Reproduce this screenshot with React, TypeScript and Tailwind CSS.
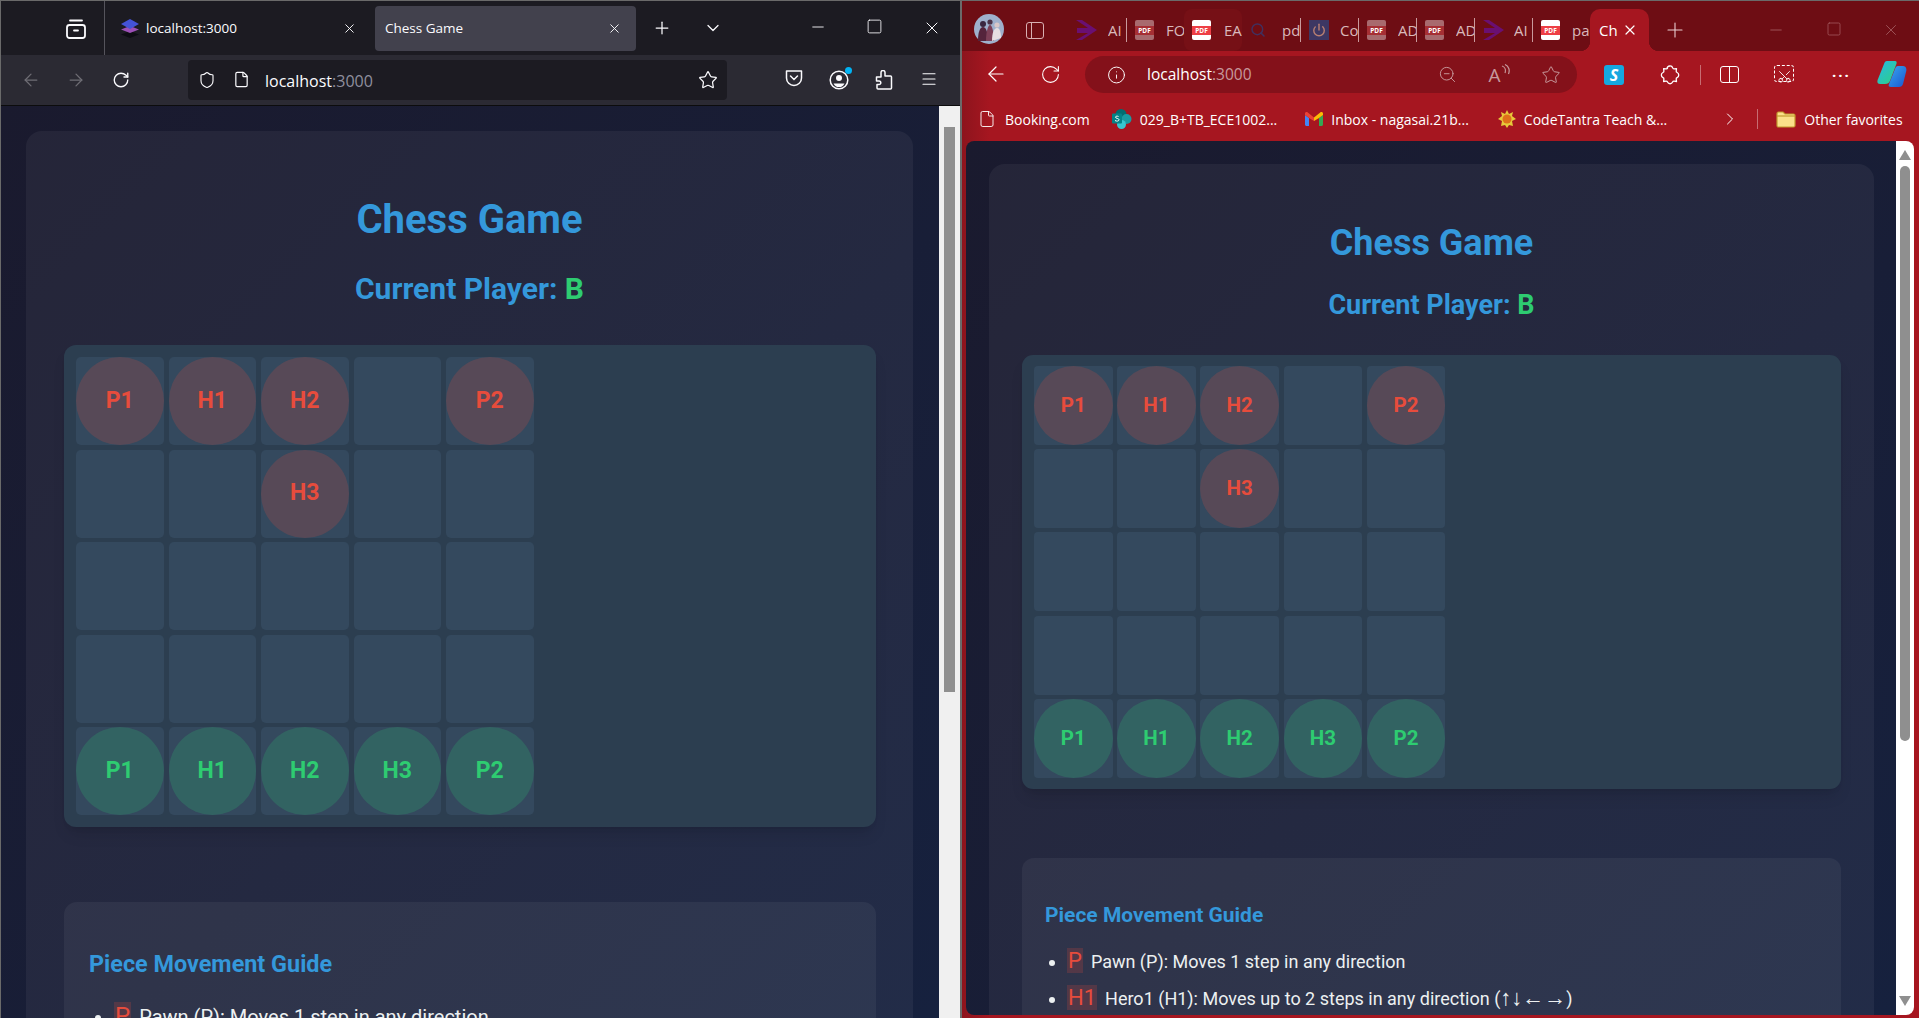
import React from "react";
import {
  ArrowLeft, ArrowRight, ChevronDown, ChevronRight, File, Info, Minus, Plus, RotateCw,
  Scissors, Search, Shield, Square, Star, X, ZoomOut, Menu, Power,
} from "lucide-react";

type Piece = { label: string; side: "a" | "b" } | null;

const board: Piece[][] = [
  [{ label: "P1", side: "a" }, { label: "H1", side: "a" }, { label: "H2", side: "a" }, null, { label: "P2", side: "a" }],
  [null, null, { label: "H3", side: "a" }, null, null],
  [null, null, null, null, null],
  [null, null, null, null, null],
  [{ label: "P1", side: "b" }, { label: "H1", side: "b" }, { label: "H2", side: "b" }, { label: "H3", side: "b" }, { label: "P2", side: "b" }],
];

// class sets for the two zoom levels of the same page
const big = {
  title: "text-[40px] leading-[48px] pt-[65px]",
  sub: "text-[30px] leading-[34px] mt-[28px]",
  board: "mt-[39px] p-[12px] rounded-[12px] ml-[38px] mr-[37px]",
  grid: "grid-cols-[repeat(5,87.5px)] grid-rows-[repeat(5,88px)] gap-x-[5px] gap-y-[4.5px]",
  piece: "text-[23px] rounded-[5px]",
  guide: "mt-[75px] ml-[38px] mr-[37px] pt-[48px] px-[25px] rounded-[13px]",
  heading: "text-[23.4px] leading-[28px]",
  list: "mt-[24px] text-[20px] pl-[25px]",
  item: "mb-[12px] leading-[29px]",
  badge: "px-[1px] mr-[8px] text-[24px]",
  arrows: "text-[24px]",
};
const small = {
  title: "text-[36px] leading-[44px] pt-[57px]",
  sub: "text-[27px] leading-[30px] mt-[25px]",
  board: "mt-[35px] py-[11px] px-[12px] rounded-[11px] mx-[33px]",
  grid: "grid-cols-[repeat(5,78.5px)] grid-rows-[repeat(5,79px)] gap-x-[4.7px] gap-y-[4.2px]",
  piece: "text-[20.5px] rounded-[4px]",
  guide: "mt-[69px] mx-[33px] pt-[44px] px-[23px] rounded-[12px]",
  heading: "text-[21px] leading-[26px]",
  list: "mt-[20px] text-[18px] pl-[22px]",
  item: "mb-[10px] leading-[26px]",
  badge: "px-[1px] mr-[8px] text-[22px]",
  arrows: "text-[22px]",
};

function Game({ s }: { s: typeof big }) {
  return (
    <div className="h-full rounded-t-[16px] bg-white/5 font-['Roboto',sans-serif]">
      <h1 className={`text-center font-bold text-[#3498db] ${s.title}`}>Chess Game</h1>
      <h2 className={`text-center font-bold text-[#3498db] ${s.sub}`}>
        Current Player: <span className="text-[#2ecc71]">B</span>
      </h2>
      <div className={`bg-[#2c3e50] shadow-lg ${s.board}`}>
        <div className={`grid ${s.grid}`}>
          {board.flat().map((p, i) => (
            <div key={i} className={`bg-[#34495e] ${s.piece}`}>
              {p && (
                <div
                  className={`flex h-full w-full items-center justify-center rounded-full font-bold ${
                    p.side === "a" ? "bg-[#e74c3c]/20 text-[#e74c3c]" : "bg-[#2ecc71]/20 text-[#2ecc71]"
                  }`}
                >
                  {p.label}
                </div>
              )}
            </div>
          ))}
        </div>
      </div>
      <div className={`h-[400px] bg-white/5 ${s.guide}`}>
        <h3 className={`font-bold text-[#3498db] ${s.heading}`}>Piece Movement Guide</h3>
        <ul className={`list-disc text-[#ecf0f1] ${s.list}`}>
          <li className={s.item}>
            <span className={`bg-[#e74c3c]/20 text-[#e74c3c] ${s.badge}`}>P</span>
            Pawn (P): Moves 1 step in any direction
          </li>
          <li className={s.item}>
            <span className={`bg-[#e74c3c]/20 text-[#e74c3c] ${s.badge}`}>H1</span>
            Hero1 (H1): Moves up to 2 steps in any direction (
            <span className={`font-['Liberation_Sans',sans-serif] leading-none ${s.arrows}`}>↑↓←→</span>)
          </li>
        </ul>
      </div>
    </div>
  );
}

function Layers() {
  return (
    <svg width="20" height="20" viewBox="0 0 20 20">
      <path d="M10 13 1 16.5 10 20l9-3.5z" fill="#0d0d12" />
      <path d="M10 8 1 11.5 10 15l9-3.5z" fill="#9b4fb5" />
      <path d="M10 1 1 6l9 5 9-5z" fill="#4453d6" />
    </svg>
  );
}

function FirefoxView() {
  return (
    <svg width="20" height="21" viewBox="0 0 20 21" fill="none" stroke="#fbfbfe" strokeWidth="1.8">
      <rect x="1" y="7" width="18" height="13" rx="2.5" />
      <path d="M4 2.5h12M8 12.5h4" strokeLinecap="round" />
    </svg>
  );
}

function Pocket() {
  return (
    <svg width="18" height="17" viewBox="0 0 18 17" fill="none" stroke="#fbfbfe" strokeWidth="1.5">
      <path d="M1.5 1h15v7a7.5 7.5 0 0 1-15 0z" strokeLinejoin="round" />
      <path d="m5.5 6 3.5 3.5L12.5 6" strokeLinecap="round" />
    </svg>
  );
}

function Profile() {
  return (
    <div className="relative">
      <svg width="20" height="20" viewBox="0 0 20 20" fill="none">
        <circle cx="10" cy="10" r="8.8" stroke="#fbfbfe" strokeWidth="1.5" />
        <circle cx="10" cy="8" r="3" fill="#fbfbfe" />
        <path d="M4.5 13.5h11a6 6 0 0 1-11 0z" fill="#fbfbfe" />
      </svg>
      <span className="absolute -right-[3px] -top-[3px] h-[7px] w-[7px] rounded-full bg-[#00b3f4]" />
    </div>
  );
}

function FoxPuzzle() {
  return (
    <svg width="18" height="20" viewBox="0 0 18 20" fill="none" stroke="#fbfbfe" strokeWidth="1.5" strokeLinejoin="round">
      <path d="M6 2.5a2 2 0 0 1 4 0V6h5.500a1 1 0 0 1 1 1v11a1 1 0 0 1-1 1H3a1 1 0 0 1-1-1v-3.500h2a1.800 1.800 0 0 0 0-3.600H1.500V7h4.500z" />
    </svg>
  );
}

function LeftWindow() {
  return (
    <div className="flex h-full w-[960px] shrink-0 flex-col border-l border-t border-[#6a6a6a] bg-[#1c1b22] font-['Open_Sans',sans-serif] text-[#fbfbfe]">
      <div className="flex h-[54px] shrink-0 items-center">
        <span className="ml-[65px] w-[20px]"><FirefoxView /></span>
        <span className="ml-[18px] w-px self-stretch bg-[#55545c]" />
        <div className="flex h-[45px] w-[270px] items-center pl-[15px] pr-[18px]">
          <Layers />
          <span className="ml-[6px] flex-1 text-[13.5px]">localhost:3000</span>
          <X size={15} strokeWidth={1.5} />
        </div>
        <div className="flex h-[45px] w-[261px] items-center justify-between rounded-[4px] bg-[#42414d] pl-[10px] pr-[14px]">
          <span className="text-[13.5px]">Chess Game</span>
          <X size={15} strokeWidth={1.5} />
        </div>
        <span className="ml-[16px] w-[20px]"><Plus size={20} strokeWidth={1.5} /></span>
        <span className="ml-[31px] w-[20px]"><ChevronDown size={20} strokeWidth={1.5} /></span>
        <div className="ml-auto flex">
          <span className="flex w-[57px] justify-center"><Minus size={18} strokeWidth={1.2} /></span>
          <span className="flex w-[57px] justify-center"><Square size={17} strokeWidth={1.2} /></span>
          <span className="flex w-[57px] justify-center"><X size={20} strokeWidth={1.2} /></span>
        </div>
      </div>
      <div className="flex h-[51px] shrink-0 items-center border-b border-[#0c0c0d] bg-[#2b2a33] pb-[1px] pl-[7px]">
        <span className="flex w-[45px] justify-center text-[#6f6e75]"><ArrowLeft size={20} strokeWidth={1.5} /></span>
        <span className="flex w-[45px] justify-center text-[#6f6e75]"><ArrowRight size={20} strokeWidth={1.5} /></span>
        <span className="flex w-[45px] justify-center"><RotateCw size={18} strokeWidth={1.8} /></span>
        <div className="ml-[45px] flex h-[40px] w-[539px] items-center rounded-[4px] bg-[#1c1b22] pl-[10px] pr-[9px]">
          <Shield size={18} strokeWidth={1.5} />
          <File size={17} strokeWidth={1.7} className="ml-[17px]" />
          <span className="ml-[15px] flex-1 pt-[3px] text-[16px]">
            localhost<span className="text-[#8f8f9d]">:3000</span>
          </span>
          <Star size={20} strokeWidth={1.5} />
        </div>
        <div className="ml-[44px] flex">
          <span className="flex w-[45px] justify-center"><Pocket /></span>
          <span className="flex w-[45px] justify-center"><Profile /></span>
          <span className="flex w-[45px] justify-center"><FoxPuzzle /></span>
          <span className="flex w-[45px] justify-center"><Menu size={18} strokeWidth={1.5} /></span>
        </div>
      </div>
      <div className="flex min-h-0 flex-1">
        <main className="h-full w-[938px] overflow-hidden bg-gradient-to-br from-[#1a1a2e] to-[#16213e] pl-[25px] pr-[26px] pt-[25px]">
          <Game s={big} />
        </main>
        <div className="flex-1 bg-[#f0f0f0] pl-[5px] pr-[5px] pt-[21px]">
          <div className="h-[565px] bg-[#8f8f8f]" />
        </div>
      </div>
    </div>
  );
}

function Sep() {
  return <span className="h-[24px] w-px shrink-0 bg-[#c99a9d]" />;
}

function Pdf({ dim }: { dim?: boolean }) {
  return (
    <span className={`relative flex h-[20px] w-[19px] shrink-0 items-center rounded-[2px] ${dim ? "bg-[#a86a6e]" : "bg-white"}`}>
      <span className={`block w-full text-center text-[6.5px] font-bold leading-[9px] text-white ${dim ? "bg-[#a62f34]" : "bg-[#ee3f45]"}`}>
        PDF
      </span>
    </span>
  );
}

function Vs() {
  return (
    <svg width="21" height="20" viewBox="0 0 21 20" className="shrink-0">
      <path d="M0 0h6l15 10-15 10H0l12-7H1V8h11z" fill="#6a0f72" />
    </svg>
  );
}

function EdgeTab({ icon, text, sep, hover }: { icon: React.ReactNode; text: string; sep?: boolean; hover?: boolean }) {
  return (
    <div className="flex items-center">
      {sep && <Sep />}
      <div
        className={`flex h-[42px] items-center overflow-hidden pl-[8px] text-[15px] text-[#d9b9bb] ${sep ? "w-[57px]" : "w-[58px]"} ${
          hover ? "rounded-[8px] bg-[#761016]" : ""
        }`}
      >
        {icon}
        <span className="ml-auto w-[18px] shrink-0 overflow-hidden whitespace-nowrap">{text}</span>
      </div>
    </div>
  );
}

function Avatar() {
  return (
    <svg width="30" height="30" viewBox="0 0 30 30" className="shrink-0">
      <circle cx="15" cy="15" r="15" fill="#9fb0cc" />
      <circle cx="9" cy="10" r="3" fill="#3a2740" />
      <path d="M4 27c0-9 2-14 5-14s5 5 5 14z" fill="#54243c" />
      <circle cx="16" cy="8" r="2.6" fill="#4b3348" />
      <path d="M12 27c0-9 2-16 4-16s4 7 4 16z" fill="#7c4058" />
      <circle cx="23" cy="11" r="2.6" fill="#d8c7c8" />
      <path d="M18 27c0-8 2-13 5-13s4 5 4 10z" fill="#e6dfe2" />
    </svg>
  );
}

function Copilot() {
  return (
    <svg width="30" height="28" viewBox="0 0 30 28">
      <defs>
        <linearGradient id="cpa" x1="0" y1="0" x2="1" y2="1">
          <stop offset="0" stopColor="#27b7e8" />
          <stop offset="1" stopColor="#2ed27e" />
        </linearGradient>
        <linearGradient id="cpb" x1="0" y1="0" x2="1" y2="1">
          <stop offset="0" stopColor="#38a8f0" />
          <stop offset="1" stopColor="#1a55d0" />
        </linearGradient>
      </defs>
      <path d="M10 1h8c2 0 2 2 1 4l-6 16c-1 2-2 3-5 3H3C0 24 0 21 1 19L7 4c.6-2 1.500-3 3-3z" fill="url(#cpa)" />
      <path d="M21 6h5c3 0 4 3 3 6l-3 12c-.6 2-2 3-4 3h-8c-2 0-3-1-2-3l6-15c.6-2 1.500-3 3-3z" fill="url(#cpb)" />
    </svg>
  );
}

function WebCapture() {
  return (
    <span className="relative flex h-[17px] w-[20px] justify-center rounded-[3px] border border-dashed border-white">
      <Scissors size={15} strokeWidth={1.4} className="absolute top-[3px] -rotate-90 text-white" />
    </span>
  );
}

function EdgePuzzle() {
  return (
    <svg width="20" height="20" viewBox="0 0 20 20" fill="none" stroke="#fff" strokeWidth="1.3" strokeLinejoin="round">
      <path d="M7 3.500a3 3 0 0 1 5.800-.5c.4.800 1 1 1.700.9l2-.3-.3 2.400c-.1.700.2 1.200.9 1.500a2.800 2.800 0 0 1 0 5.100c-.7.300-1 .8-.9 1.500l.3 2.400-2.400-.3c-.7-.1-1.200.2-1.500.9a2.800 2.800 0 0 1-5.100 0c-.3-.7-.8-1-1.500-.9l-2.400.3.3-2.400c.1-.7-.2-1.200-.9-1.500a2.800 2.800 0 0 1 0-5.100c.7-.3 1-.8.9-1.500l-.3-2.400 2.400.3c.7.100 1.400-.2 1.500-.4z" />
    </svg>
  );
}

function Gmail() {
  return (
    <svg width="18" height="14" viewBox="0 0 18 14" className="shrink-0">
      <path d="M0 3v9.500C0 13.300.7 14 1.500 14H4V6z" fill="#4285f4" />
      <path d="M14 6v8h2.500c.8 0 1.500-.7 1.500-1.500V3z" fill="#34a853" />
      <path d="M4 6 0 3V1.500C0 .2 1.500-.5 2.500.3L4 1.500 9 5.500V9z" fill="#ea4335" />
      <path d="m14 1.500 1.500-1.200C16.500-.5 18 .2 18 1.500V3l-4 3-5 3V5.500z" fill="#fbbc04" />
    </svg>
  );
}

function SharePoint() {
  return (
    <svg width="20" height="20" viewBox="0 0 20 20" className="shrink-0">
      <circle cx="9" cy="5.500" r="5.500" fill="#036c70" />
      <circle cx="14.500" cy="10" r="5" fill="#1a9ba1" />
      <circle cx="9.500" cy="15.500" r="4.500" fill="#37c6d0" />
      <rect x="0" y="4.500" width="10" height="10" rx="1" fill="#038387" />
      <path d="M3 11.500c1.500 1 4 .8 4-.8 0-1.600-3.500-1-3.500-2.500 0-1.200 2-1.200 3-.7" stroke="#fff" strokeWidth="1" fill="none" />
    </svg>
  );
}

function Sun() {
  return (
    <svg width="18" height="18" viewBox="0 0 18 18" className="shrink-0">
      <path d="M9 0l2 4 4-2-1 4 4 3-4 2 1 5-4-1-2 3-2-3-4 1 1-5-4-2 4-3-1-4 4 2z" fill="#e7c93a" />
      <circle cx="9" cy="9" r="4.500" fill="#e0701a" />
    </svg>
  );
}

function YellowFolder() {
  return (
    <svg width="20" height="17" viewBox="0 0 20 17" className="shrink-0">
      <path d="M1 3c0-1 .6-2 1.500-2H7l2 2h8.500c.9 0 1.500.7 1.500 1.500v10c0 .9-.6 1.500-1.500 1.500h-15C1.600 16 1 15.400 1 14.500z" fill="#fbe08a" stroke="#c29a2e" strokeWidth="1.200" />
      <path d="M1 5h18" stroke="#c29a2e" strokeWidth="1.200" />
    </svg>
  );
}

function ReadAloud() {
  return (
    <span className="flex items-start text-[#c79a9d]">
      <span className="font-['Open_Sans',sans-serif] text-[19px] leading-[22px]">A</span>
      <svg width="9" height="14" viewBox="0 0 9 14" fill="none" stroke="currentColor" strokeWidth="1.200">
        <path d="M1 2c3 1 4 4 3 7M4 .5c4 1.500 5 6 3.500 9.500" />
      </svg>
    </span>
  );
}

function RightWindow() {
  const ico = "flex shrink-0 justify-center";
  return (
    <div className="flex h-full w-[959px] shrink-0 flex-col border-l-2 border-t border-[#6a6a6a] bg-[linear-gradient(90deg,#8d141d,#a61620_28px)] font-['Open_Sans',sans-serif] text-white">
      <div className="flex h-[50px] shrink-0 items-end bg-[#6e0d14]">
        <div className="flex h-[42px] w-full items-center">
          <span className="ml-[12px] -mt-[2px]"><Avatar /></span>
          <span className="ml-[22px] flex h-[17px] w-[18px] shrink-0 rounded-[3px] border-[1.5px] border-[#d9b0b3]">
            <span className="w-[5px] border-r border-[#d9b0b3]" />
          </span>
          <span className="ml-[24px]"><Sep /></span>
          <div className="flex">
            <EdgeTab icon={<Vs />} text="AI" />
            <EdgeTab sep icon={<Pdf dim />} text="FO" />
            <EdgeTab hover icon={<Pdf />} text="EA" />
            <EdgeTab icon={<Search size={16} strokeWidth={2.2} className="shrink-0 text-[#41305e]" />} text="pd" />
            <EdgeTab sep icon={<span className="flex h-[20px] w-[20px] shrink-0 items-center justify-center bg-[#3d3763]"><Power size={14} className="text-[#b87f72]" strokeWidth={2.4} /></span>} text="Co" />
            <EdgeTab sep icon={<Pdf dim />} text="AD" />
            <EdgeTab sep icon={<Pdf dim />} text="AD" />
            <EdgeTab sep icon={<Vs />} text="AI" />
            <EdgeTab sep icon={<Pdf />} text="pa" />
          </div>
          <div className="relative flex h-[42px] w-[59px] items-center rounded-t-[10px] bg-[#a61620] pl-[9px] text-[15px]">
            <span className="absolute -left-[10px] bottom-0 h-[10px] w-[10px] bg-[radial-gradient(circle_at_0_0,#6e0d14_10px,#a61620_10.5px)]" />
            <span className="absolute -right-[10px] bottom-0 h-[10px] w-[10px] bg-[radial-gradient(circle_at_100%_0,#6e0d14_10px,#a61620_10.5px)]" />
            <span className="w-[19px] overflow-hidden whitespace-nowrap">Chess</span>
            <X size={16} strokeWidth={1.8} className="ml-[4px]" />
          </div>
          <span className="ml-[14px]"><Plus size={24} strokeWidth={1.1} className="text-[#e9cfd1]" /></span>
          <div className="ml-auto flex text-[#a2595d]">
            <span className="flex w-[58px] justify-center"><Minus size={18} strokeWidth={1.2} /></span>
            <span className="flex w-[58px] justify-center"><Square size={16} strokeWidth={1.2} /></span>
            <span className="flex w-[56px] justify-center"><X size={18} strokeWidth={1.2} /></span>
          </div>
        </div>
      </div>
      <div className="flex h-[54px] shrink-0 items-start pt-[5px]">
        <span className="ml-[22px] mt-[6px]"><ArrowLeft size={24} strokeWidth={1.2} /></span>
        <span className="ml-[32px] mt-[8px]"><RotateCw size={21} strokeWidth={1.2} /></span>
        <div className="ml-[24px] flex h-[37px] w-[492px] items-center rounded-full bg-[#84111a] pl-[22px]">
          <Info size={20} strokeWidth={1.2} />
          <span className="ml-[21px] w-[288px] text-[15.5px]">
            localhost<span className="text-[#c79a9d]">:3000</span>
          </span>
          <span className={`${ico} w-[52px] text-[#c79a9d]`}><ZoomOut size={19} strokeWidth={1.2} /></span>
          <span className={`${ico} w-[52px]`}><ReadAloud /></span>
          <span className={`${ico} w-[52px] text-[#c79a9d]`}><Star size={20} strokeWidth={1.2} /></span>
        </div>
        <span className="ml-[27px] mt-[9px] flex h-[20px] w-[20px] items-center justify-center rounded-[3px] bg-[#15a8e0] text-[16px] font-bold italic leading-none">S</span>
        <span className="ml-[36px] mt-[9px]"><EdgePuzzle /></span>
        <span className="ml-[20px] mt-[9px] h-[20px] w-px bg-[#c76c72]" />
        <span className="ml-[19px] mt-[10px] flex h-[17px] w-[19px] rounded-[3px] border border-white">
          <span className="w-[9px] border-r border-white" />
        </span>
        <span className="ml-[35px] mt-[9px]"><WebCapture /></span>
        <span className="ml-[38px] mt-[12px] text-[15px] font-bold leading-none tracking-[2px]">···</span>
        <span className="ml-[26px] mt-[4px]"><Copilot /></span>
      </div>
      <div className="flex h-[36px] shrink-0 items-center pb-[8px] pl-[16px] text-[14px]">
        <File size={18} strokeWidth={1.2} className="shrink-0" />
        <span className="ml-[9px]">Booking.com</span>
        <span className="ml-[22px]"><SharePoint /></span>
        <span className="ml-[8px]">029_B+TB_ECE1002...</span>
        <span className="ml-[28px]"><Gmail /></span>
        <span className="ml-[8px]">Inbox - nagasai.21b...</span>
        <span className="ml-[29px]"><Sun /></span>
        <span className="ml-[8px]">CodeTantra Teach &...</span>
        <span className="ml-[53px]"><ChevronRight size={20} strokeWidth={1.2} /></span>
        <span className="ml-[17px] h-[20px] w-px bg-[#c76c72]" />
        <span className="ml-[18px]"><YellowFolder /></span>
        <span className="ml-[8px]">Other favorites</span>
      </div>
      <div className="ml-[4px] mr-[5px] mb-[3px] flex min-h-0 flex-1 overflow-hidden rounded-[8px]">
        <main className="h-full w-[930px] shrink-0 overflow-hidden bg-gradient-to-br from-[#1a1a2e] to-[#16213e] pl-[23px] pr-[22px] pt-[23px]">
          <Game s={small} />
        </main>
        <div className="flex flex-1 flex-col items-center bg-white pt-[9px]">
          <svg width="12" height="10" viewBox="0 0 12 10"><path d="M6 0l6 10H0z" fill="#8f8f8f" /></svg>
          <div className="mt-[6px] h-[575px] w-[10px] rounded-full bg-[#8f8f8f]" />
          <svg width="12" height="10" viewBox="0 0 12 10" className="mb-[9px] mt-auto"><path d="M6 10 12 0H0z" fill="#8f8f8f" /></svg>
        </div>
      </div>
    </div>
  );
}

export default function App() {
  return (
    <div className="flex h-[1018px] w-[1919px] overflow-hidden">
      <LeftWindow />
      <RightWindow />
    </div>
  );
}
